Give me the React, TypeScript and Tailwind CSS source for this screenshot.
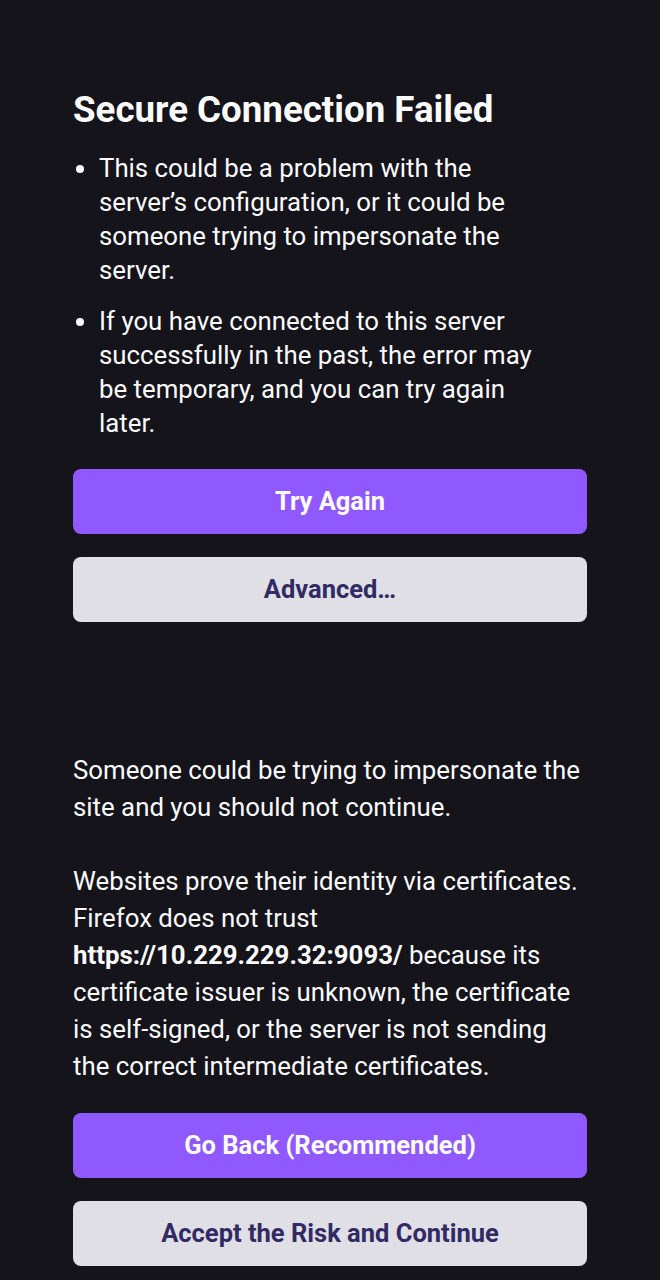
export default function App() {
  const btn =
    'flex h-[65px] w-full items-center justify-center rounded-lg text-[25.5px] font-bold'

  return (
    <div className="min-h-[1280px] bg-[#15141a] font-['Roboto',sans-serif] text-[#fbfbfe]">
      <div className="mx-auto w-[514px] pt-[88px]">
        <h1 className="text-[36.7px] font-bold leading-[44px]">Secure Connection Failed</h1>

        <ul className="mt-[19px] list-disc pl-[26px] pr-[40px] text-[25.8px] leading-[34px]">
          <li>
            This could be a problem with the server’s configuration, or it could be someone
            trying to impersonate the server.
          </li>
          <li className="mt-[17px]">
            If you have connected to this server successfully in the past, the error may be
            temporary, and you can try again later.
          </li>
        </ul>

        <div className="mt-[29px] flex flex-col gap-[23px]">
          <button className={`${btn} bg-[#9059ff] text-[#fbfbfe]`}>Try Again</button>
          <button className={`${btn} bg-[#e0dfe5] text-[#312a64]`}>Advanced…</button>
        </div>

        <div className="mt-[130px] text-[25.8px] leading-[37px]">
          <p>Someone could be trying to impersonate the site and you should not continue.</p>
          <p className="mt-[37px]">
            Websites prove their identity via certificates. Firefox does not trust{' '}
            <span className="font-bold">https://10.229.229.32:9093/</span> because its
            certificate issuer is unknown, the certificate is self-signed, or the server is
            not sending the correct intermediate certificates.
          </p>
        </div>

        <div className="mt-[28px] flex flex-col gap-[23px]">
          <button className={`${btn} bg-[#9059ff] text-[#fbfbfe]`}>Go Back (Recommended)</button>
          <button className={`${btn} bg-[#e0dfe5] text-[#312a64]`}>
            Accept the Risk and Continue
          </button>
        </div>
      </div>
    </div>
  )
}
